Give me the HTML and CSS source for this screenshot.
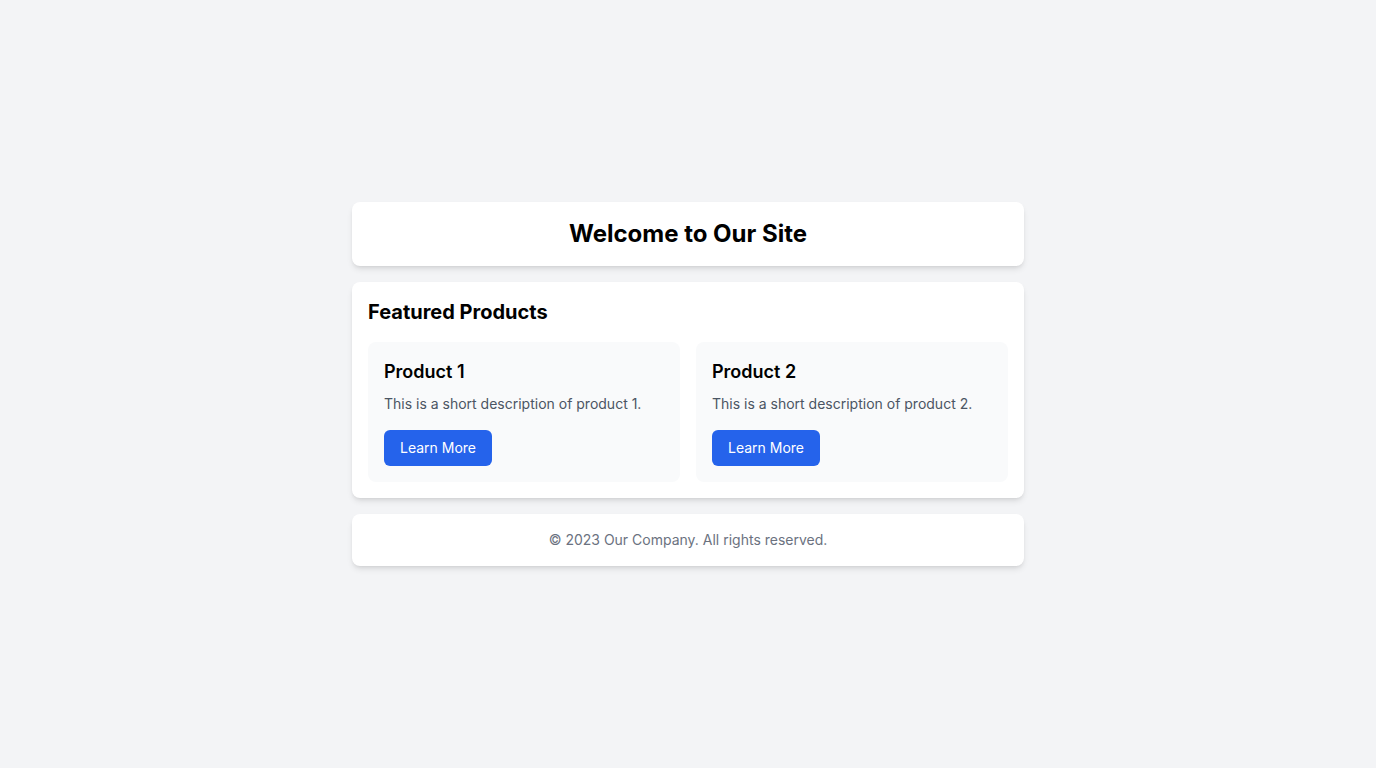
FILE: index.html
```html
<!DOCTYPE html>
<html lang="en">
<head>
<meta charset="utf-8">
<title>Welcome to Our Site</title>
<link rel="stylesheet" href="styles.css">
</head>
<body>
<div class="page">
  <div class="wrap">
    <header class="card header">
      <h1>Welcome to Our Site</h1>
    </header>
    <main class="card main">
      <h2>Featured Products</h2>
      <div class="grid">
        <div class="product">
          <h3>Product 1</h3>
          <p>This is a short description of product 1.</p>
          <button class="btn">Learn More</button>
        </div>
        <div class="product">
          <h3>Product 2</h3>
          <p>This is a short description of product 2.</p>
          <button class="btn">Learn More</button>
        </div>
      </div>
    </main>
    <footer class="card footer">
      <p>© 2023 Our Company. All rights reserved.</p>
    </footer>
  </div>
</div>
</body>
</html>
```
FILE: styles.css
```css
* { box-sizing: border-box; }
html, body { margin: 0; padding: 0; }
body {
  background: #f3f4f6;
  font-family: Inter, "Noto Sans", "Liberation Sans", sans-serif;
  color: #000;
}
.page {
  min-height: 100vh;
  display: flex;
  align-items: center;
  justify-content: center;
}
.wrap {
  width: 672px;
  display: flex;
  flex-direction: column;
  gap: 16px;
}
.card {
  background: #fff;
  border-radius: 8px;
  padding: 16px;
  box-shadow: 0 4px 6px -1px rgba(0,0,0,.1), 0 2px 4px -2px rgba(0,0,0,.1);
}
.header h1 {
  margin: 0;
  text-align: center;
  font-size: 24px;
  line-height: 32px;
  font-weight: 700;
}
.main h2 {
  margin: 0 0 16px;
  font-size: 20px;
  line-height: 28px;
  font-weight: 700;
}
.grid {
  display: grid;
  grid-template-columns: 1fr 1fr;
  gap: 16px;
}
.product {
  background: #f9fafb;
  border-radius: 8px;
  padding: 16px;
}
.product h3 {
  margin: 0 0 8px;
  font-size: 18px;
  line-height: 28px;
  font-weight: 600;
}
.product p {
  margin: 0 0 16px;
  font-size: 14px;
  line-height: 20px;
  color: #4b5563;
}
.btn {
  display: inline-block;
  border: 0;
  background: #2563eb;
  color: #fff;
  font-family: inherit;
  font-size: 14px;
  line-height: 20px;
  padding: 8px 16px;
  border-radius: 6px;
  cursor: pointer;
}
.footer p {
  margin: 0;
  text-align: center;
  font-size: 14px;
  line-height: 20px;
  color: #6b7280;
}
```
